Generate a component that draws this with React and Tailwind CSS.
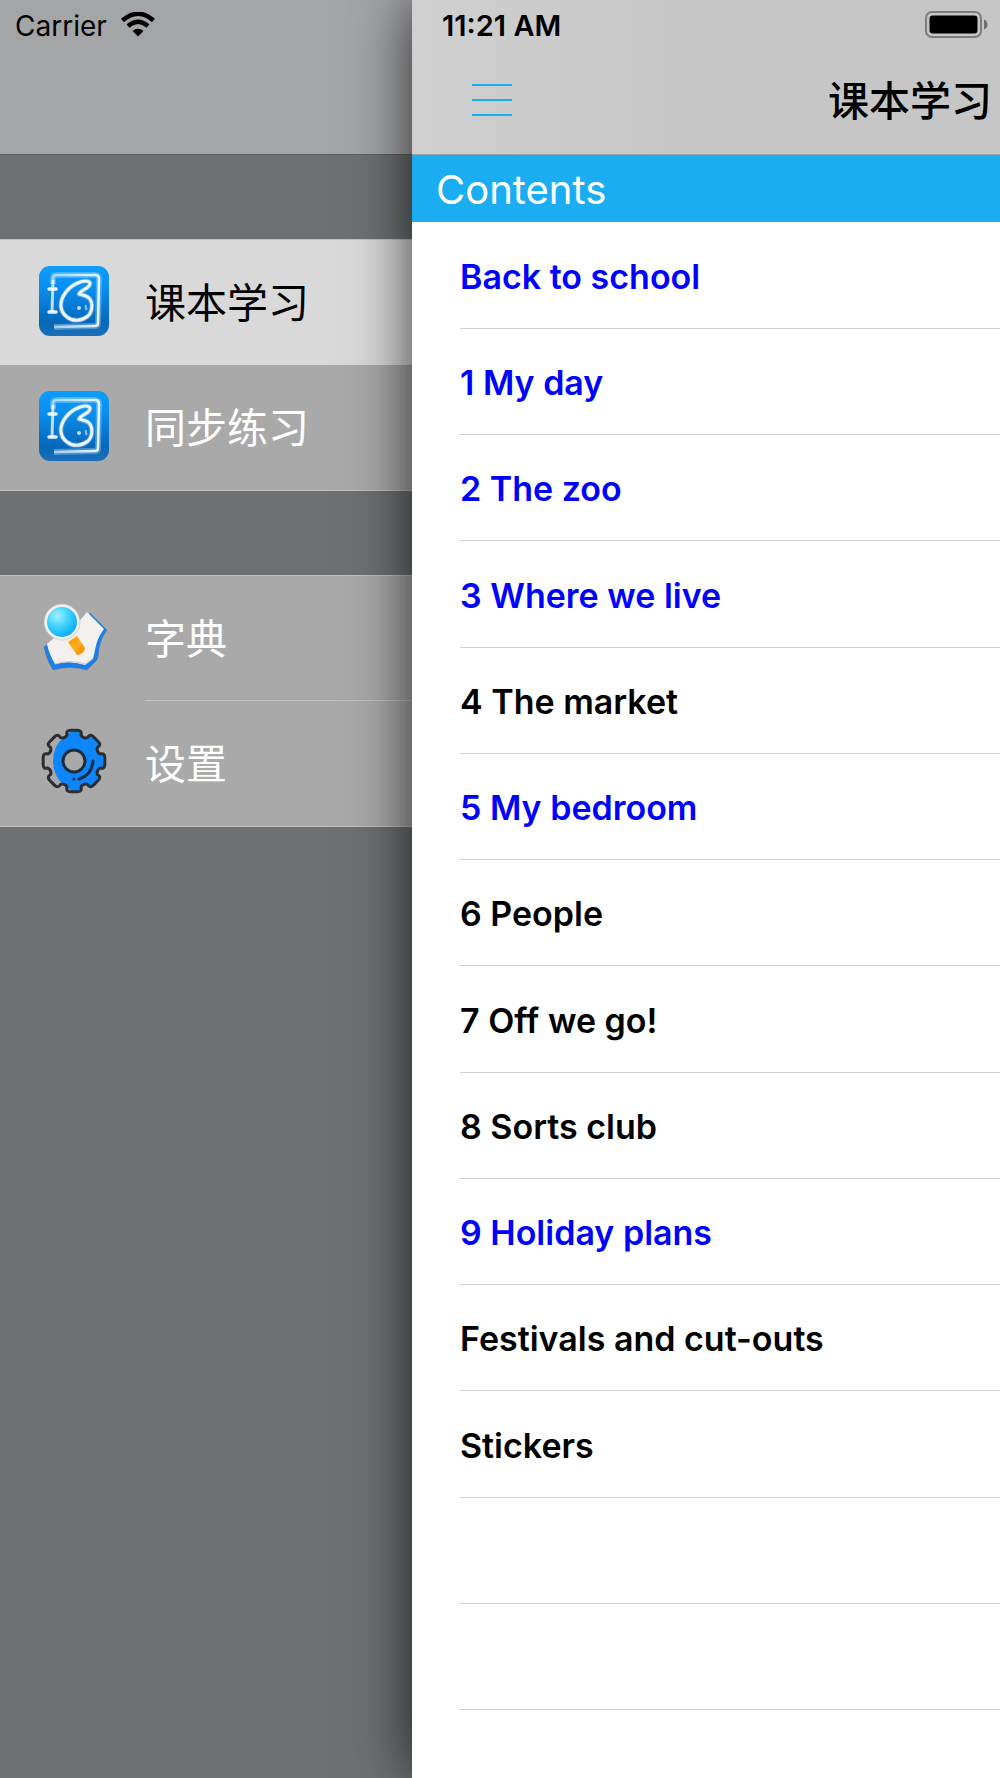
import React, { useState } from "react";

const menuGroups = [
  [
    { id: "textbook", label: "课本学习", icon: TextbookIcon },
    { id: "practice", label: "同步练习", icon: TextbookIcon },
  ],
  [
    { id: "dictionary", label: "字典", icon: DictionaryIcon },
    { id: "settings", label: "设置", icon: GearIcon },
  ],
];

const chapters = [
  { title: "Back to school", available: true },
  { title: "1 My day", available: true },
  { title: "2 The zoo", available: true },
  { title: "3 Where we live", available: true },
  { title: "4 The market", available: false },
  { title: "5 My bedroom", available: true },
  { title: "6 People", available: false },
  { title: "7 Off we go!", available: false },
  { title: "8 Sorts club", available: false },
  { title: "9 Holiday plans", available: true },
  { title: "Festivals and cut-outs", available: false },
  { title: "Stickers", available: false },
];

// empty rows under the last chapter
const emptyRows = [0, 1];

function TextbookIcon() {
  return (
    <svg viewBox="0 0 70 70" className="mb-1 h-[70px] w-[70px] shrink-0" fill="none">
      <defs>
        <linearGradient id="bookBg" x1="0" y1="0" x2="0" y2="1">
          <stop offset="0" stopColor="#0a9dff" />
          <stop offset="0.3" stopColor="#0a8ff0" />
          <stop offset="0.8" stopColor="#0667b8" />
          <stop offset="1" stopColor="#1e6fb8" />
        </linearGradient>
        <linearGradient id="bookFrame" x1="0" y1="0" x2="1" y2="0">
          <stop offset="0" stopColor="#fff" stopOpacity="0.5" />
          <stop offset="1" stopColor="#fff" stopOpacity="0.9" />
        </linearGradient>
      </defs>
      <rect width="70" height="70" rx="11" fill="url(#bookBg)" />
      <path d="M14 18V12Q14 9 18 9H56Q60 9 60 13L59 57Q59 60 56 60L15 61" stroke="#9fd6ff" strokeOpacity="0.4" strokeWidth="6" />
      <path d="M14 18V12Q14 9 18 9H56Q60 9 60 13L59 57Q59 60 56 60L15 61" stroke="url(#bookFrame)" strokeWidth="2.5" />
      <path d="M14 14L13 46" stroke="#fff" strokeOpacity="0.75" strokeWidth="3" />
      <path d="M10 23H17M10 46H17" stroke="#fff" strokeOpacity="0.9" strokeWidth="3.5" strokeLinecap="round" />
      <path
        d="M51 17C48 12 34 17 27 26C20 35 20 45 28 51C34 56 43 55 49 50C54 45 54 36 50 32C47 29 42 29 40 28C41 24 52 22 51 17Z"
        stroke="#a8d8ff"
        strokeOpacity="0.4"
        strokeWidth="5"
        strokeLinejoin="round"
      />
      <path
        d="M51 17C48 12 34 17 27 26C20 35 20 45 28 51C34 56 43 55 49 50C54 45 54 36 50 32C47 29 42 29 40 28C41 24 52 22 51 17Z"
        stroke="#fff"
        strokeOpacity="0.9"
        strokeWidth="3"
        strokeLinejoin="round"
      />
      <circle cx="40" cy="42" r="2" fill="#b7dcff" />
      <path d="M47 39Q46 42 48 44" stroke="#7fc0f5" strokeWidth="2" />
    </svg>
  );
}

function DictionaryIcon() {
  return (
    <svg viewBox="0 0 70 70" className="mb-1 h-[70px] w-[70px] shrink-0">
      <defs>
        <radialGradient id="lens" cx="0.35" cy="0.3" r="0.8">
          <stop offset="0" stopColor="#a5f2ff" />
          <stop offset="0.45" stopColor="#3fd3ff" />
          <stop offset="1" stopColor="#06a5f5" />
        </radialGradient>
        <linearGradient id="handle" x1="0" y1="0" x2="1" y2="1">
          <stop offset="0" stopColor="#ff9500" />
          <stop offset="0.5" stopColor="#ffb01e" />
          <stop offset="1" stopColor="#ff8000" />
        </linearGradient>
      </defs>
      <path
        d="M51 11L68 28Q62 36 60 46Q60 54 58 58L48 68Q31 63 14 68Q7 57 5 45L14 38L38 28Z"
        fill="#1a7fe8"
        stroke="#6b7683"
        strokeOpacity="0.5"
        strokeWidth="1"
      />
      <path d="M48 10L65 27Q58 36 56 48L54 57L46 63Q31 58 16 62Q10 52 8 42L16 35L36 24Z" fill="#f3f1f0" />
      <path d="M16 62Q31 57 46 62L54 56" fill="none" stroke="#e2c5ae" strokeWidth="1" />
      <circle cx="23" cy="20" r="18" fill="#f1eeee" stroke="#8d8d8d" strokeOpacity="0.3" strokeWidth="1" />
      <circle cx="23" cy="20" r="15" fill="url(#lens)" />
      <path d="M29 40L38 34L46 46Q45 52 38 53Z" fill="url(#handle)" />
    </svg>
  );
}

// outline of the cog: eight round teeth round a centre at 35,34
function cogPath() {
  const point = (radius, degrees) => {
    const angle = (degrees * Math.PI) / 180;
    return `${35 + radius * Math.sin(angle)} ${34 - radius * Math.cos(angle)}`;
  };
  let path = `M${point(27, -15)}`;
  for (let i = 0; i < 8; i++) {
    const a = i * 45;
    path += `Q${point(32, -15 + a)} ${point(31, -6 + a)}`;
    path += `L${point(31, 6 + a)}Q${point(32, 15 + a)} ${point(27, 15 + a)}`;
    path += `Q${point(24, 22.5 + a)} ${point(27, 30 + a)}`;
  }
  return path + "Z";
}

function GearIcon() {
  const path = cogPath();
  return (
    <svg viewBox="0 0 70 70" className="mb-1 h-[70px] w-[70px] shrink-0" fill="none">
      <clipPath id="gearFill">
        <circle cx="47" cy="34" r="33" />
      </clipPath>
      <path d={path} fill="#0d86fb" clipPath="url(#gearFill)" />
      <circle cx="35" cy="34" r="11" fill="#a9a9a9" stroke="#1d2b3a" strokeWidth="3" />
      <path d={path} stroke="#2a2d31" strokeWidth="3" strokeLinejoin="round" />
      <path d="M54 34Q53 48 40 52" stroke="#12304f" strokeWidth="3" strokeLinecap="round" />
      <circle cx="35" cy="52" r="1.5" fill="#12304f" />
    </svg>
  );
}

function WifiIcon() {
  return (
    <svg viewBox="0 0 34 25" className="h-[25px] w-[34px]" fill="none">
      <path d="M1.5 8.5Q17 -5 32.5 8.5" stroke="#000" strokeWidth="4.5" />
      <path d="M7 14Q17 5.5 27 14" stroke="#000" strokeWidth="4.5" />
      <path d="M11.5 19Q17 14.5 22.5 19L17 24.5Z" fill="#000" />
    </svg>
  );
}

function BatteryIcon() {
  return (
    <svg viewBox="0 0 63 27" className="h-[27px] w-[63px]" fill="none">
      <rect x="1" y="1" width="55" height="25" rx="6" stroke="#7c7c7c" strokeWidth="2" />
      <rect x="4.5" y="4.5" width="48" height="18" rx="3" fill="#000" />
      <path d="M59 8.5Q62.5 10 62.5 13.5Q62.5 17 59 18.5Z" fill="#6f6f6f" />
    </svg>
  );
}

function Sidebar({ selected, onSelect }) {
  return (
    <aside className="w-[412px] shrink-0 bg-[#6d7173]">
      <header className="h-[155px] border-b border-[#5d6163] bg-[#a4a5a7] pl-[15px]">
        <div className="flex h-12 items-center gap-3.5 text-[28px]">
          <span className="pt-1">Carrier</span>
          <WifiIcon />
        </div>
      </header>
      <nav className="flex flex-col gap-[84px] pt-[84px]">
        {menuGroups.map((group, index) => (
          <ul key={index} className="border-y border-[#c1c1c3] bg-[#a9a9a9]">
            {group.map((item) => {
              const Icon = item.icon;
              const active = item.id === selected;
              return (
                <li key={item.id} className="group">
                  <button
                    onClick={() => onSelect(item.id)}
                    className={`flex h-[125px] w-full items-center pl-[39px] text-left text-[41px] ${
                      active ? "bg-[#d9d9d9] text-black" : "text-white"
                    }`}
                  >
                    <Icon />
                    <span
                      className={`ml-9 flex h-full flex-1 items-center border-b pt-1 group-last:border-transparent ${
                        active ? "border-transparent" : "border-[#c1c1c3]"
                      }`}
                    >
                      {item.label}
                    </span>
                  </button>
                </li>
              );
            })}
          </ul>
        ))}
      </nav>
    </aside>
  );
}

function Contents() {
  return (
    <main className="relative min-w-0 flex-1 bg-white shadow-[0_0_56px_rgba(0,0,0,0.75)]">
      <header className="h-[155px] border-b border-[#8fa3ad] bg-linear-to-r from-[#d0d0d0] to-[#c6c6c6] to-45%">
        <div className="flex h-12 items-center justify-between pr-3 pl-[30px] text-[29px] font-semibold">
          <time className="pt-1">11:21 AM</time>
          <BatteryIcon />
        </div>
        <div className="flex h-[104px] items-center justify-between pr-2 pl-[60px]">
          <button aria-label="Menu" className="flex w-10 flex-col gap-[13px]">
            <span className="h-[2px] bg-[#1badf2]" />
            <span className="h-[2px] bg-[#1badf2]" />
            <span className="h-[2px] bg-[#1badf2]" />
          </button>
          <h1 className="pt-1 text-[41px] font-medium">课本学习</h1>
        </div>
      </header>
      <h2 className="flex h-[67px] items-center bg-[#1badf2] pt-0.5 pl-6 text-[40px] text-white">
        Contents
      </h2>
      <ul className="pt-px pl-12">
        {chapters.map((chapter) => (
          <li
            key={chapter.title}
            className="h-[106px] border-b border-[#d0d0d2] nth-[4n]:h-[107px]"
          >
            <button
              className={`h-full w-full pt-0.5 text-left text-[34px] font-semibold ${
                chapter.available ? "text-[#0000ff]" : "text-black"
              }`}
            >
              {chapter.title}
            </button>
          </li>
        ))}
        {emptyRows.map((row) => (
          <li key={row} className="h-[106px] border-b border-[#d0d0d2]" />
        ))}
      </ul>
    </main>
  );
}

function App() {
  const [selected, setSelected] = useState("textbook");

  return (
    <div className="flex min-h-screen overflow-hidden font-['Inter','Noto_Sans_CJK_SC',sans-serif] text-black">
      <Sidebar selected={selected} onSelect={setSelected} />
      <Contents />
    </div>
  );
}

export default App;
